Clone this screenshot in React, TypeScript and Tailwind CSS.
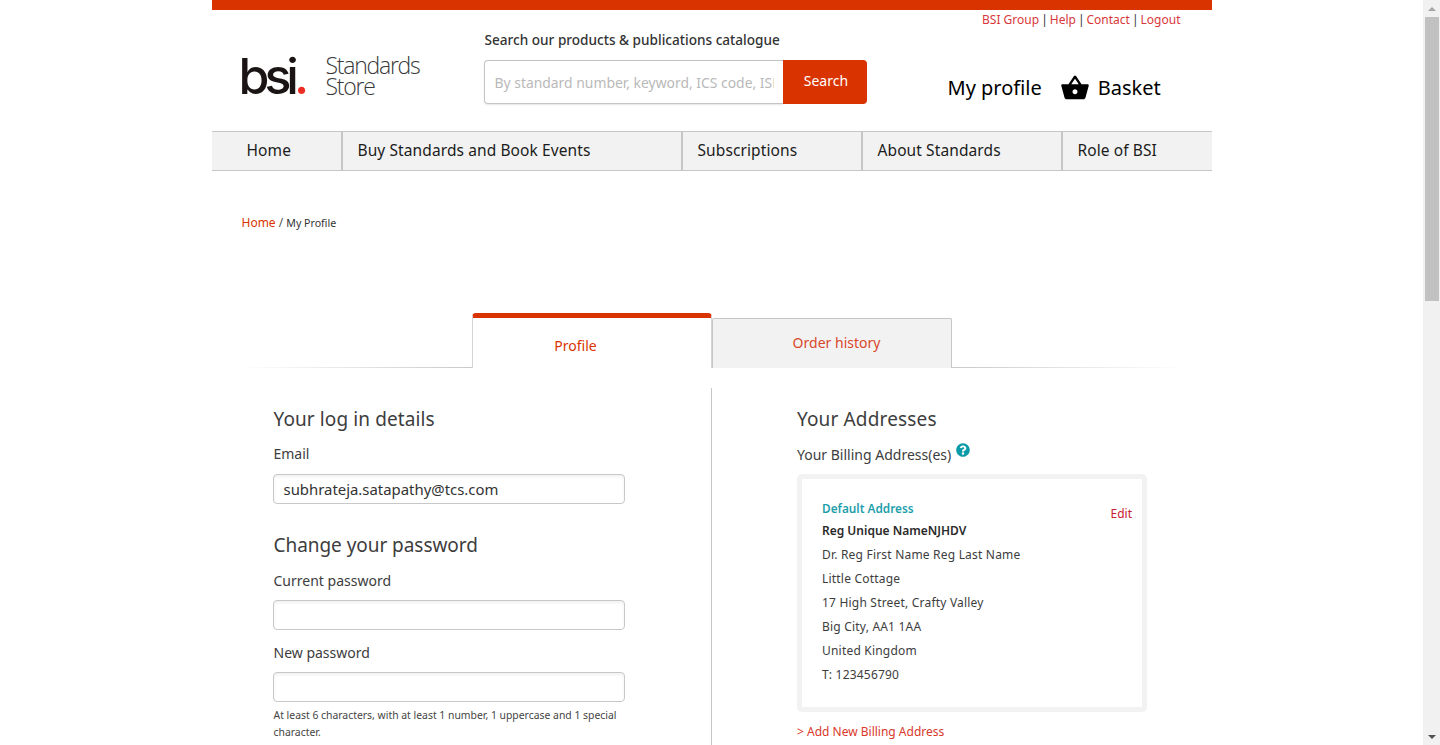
import { FaQuestionCircle } from "react-icons/fa";

const font = "font-['Noto_Sans',sans-serif]";

const navItems = [
  { label: "Home", width: "w-[131px]" },
  { label: "Buy Standards and Book Events", width: "w-[340px]" },
  { label: "Subscriptions", width: "w-[180px]" },
  { label: "About Standards", width: "w-[200px]" },
  { label: "Role of BSI", width: "w-[149px]" },
];

const utilityLinks = ["BSI Group", "Help", "Contact", "Logout"];

const addressLines = [
  "Dr. Reg First Name Reg Last Name",
  "Little Cottage",
  "17 High Street, Crafty Valley",
  "Big City, AA1 1AA",
  "United Kingdom",
  "T: 123456790",
];

function BasketIcon() {
  return (
    <svg viewBox="0 0 24 24" className="h-[30px] w-[30px]" fill="#000">
      <path d="M17.21 9l-4.38-6.56c-.19-.28-.51-.42-.83-.42-.32 0-.64.14-.83.43L6.79 9H2c-.55 0-1 .45-1 1 0 .09.01.18.04.27l2.54 9.27c.23.84 1 1.46 1.92 1.46h13c.92 0 1.69-.62 1.93-1.46l2.54-9.27L23 10c0-.55-.45-1-1-1h-4.79zM9 9l3-4.4L15 9H9zm3 8c-1.1 0-2-.9-2-2s.9-2 2-2 2 .9 2 2-.9 2-2 2z" />
    </svg>
  );
}

function Field({ label, value, compact }: { label: string; value?: string; compact?: boolean }) {
  return (
    <div>
      <label className="block h-[20px] pl-[1px] text-[14px] leading-[20px] text-[#3d3d3d]">{label}</label>
      <div
        className={`${compact ? "mt-[9px]" : "mt-[10px]"} flex h-[30px] w-[352px] items-center rounded-[4px] border border-[#c8c8c8] bg-white px-[10px] text-[14.9px] text-[#333] shadow-[inset_0_2px_3px_rgba(0,0,0,0.06)]`}
      >
        {value}
      </div>
    </div>
  );
}

function Scrollbar() {
  return (
    <div className="flex h-full w-[17px] shrink-0 flex-col items-center bg-[#f1f1f1]">
      <div className="flex h-[17px] items-center justify-center">
        <div className="h-0 w-0 border-x-[4px] border-b-[4px] border-x-transparent border-b-[#a3a3a3]" />
      </div>
      <div className="h-[284px] w-[14px] bg-[#c1c1c1]" />
      <div className="flex-1" />
      <div className="flex h-[17px] items-center justify-center">
        <div className="h-0 w-0 border-x-[4px] border-t-[4px] border-x-transparent border-t-[#505050]" />
      </div>
    </div>
  );
}

export default function App() {
  return (
    <div className={`flex h-[745px] overflow-hidden bg-white ${font}`}>
      <div className="flex-1 overflow-hidden">
        <div className="mx-auto w-[1000px]">
          {/* Header */}
          <div className="h-[10px] bg-[#d93400]" />
          <div className="flex h-[20px] justify-end pr-[31px] pt-[1px] text-[12px] leading-[18px] text-[#333]">
            {utilityLinks.map((link, i) => (
              <span key={link}>
                {i > 0 && <span className="mx-[2px]">|</span>}
                <a className="text-[#d9383a]">{link}</a>
              </span>
            ))}
          </div>
          <div className="flex h-[101px]">
            <div className="flex w-[272px] items-center pb-[10px] pl-[27px]">
              <span className="w-[87px] font-['Inter',sans-serif] text-[50px] font-medium leading-[50px] tracking-[-5px] text-[#1a1415]">
                bsi<span className="text-[#ee2e24]">.</span>
              </span>
              <span className="font-['Open_Sans',sans-serif] text-[23px] font-light leading-[21px] tracking-[-1.25px] text-[#3a3a3a]">
                Standards
                <br />
                Store
              </span>
            </div>
            <div className="w-[383px]">
              <p className="h-[20px] pl-[1px] text-[13.6px] font-medium leading-[20px] text-[#333]">Search our products &amp; publications catalogue</p>
              <div className="mt-[10px] flex h-[44px]">
                <input
                  readOnly
                  placeholder="By standard number, keyword, ICS code, ISBN"
                  className="w-[299px] rounded-l-[4px] border border-r-0 border-[#c4c4c4] pl-[10px] pr-[9px] pt-[2px] text-[13.9px] shadow-[0_1px_2px_rgba(0,0,0,0.1)] outline-none placeholder:text-[#b9b9b9]"
                />
                <button className="w-[84px] rounded-r-[4px] bg-[#d93400] pb-[3px] pl-[3px] text-[14px] tracking-[0.05px] text-white">Search</button>
              </div>
            </div>
            <div className="flex flex-1 items-center pl-[81px] pt-[15px] text-[20px] text-black">
              <span>My profile</span>
              <span className="ml-[18px] mr-[8px]">
                <BasketIcon />
              </span>
              <span>Basket</span>
            </div>
          </div>

          {/* Main nav */}
          <nav className="flex h-[40px] border-y border-[#c6c6c6] bg-[#f2f2f2] text-[15.5px] leading-[37px] tracking-[0.1px] text-[#1c1c1c]">
            {navItems.map((item, i) => (
              <div
                key={item.label}
                className={`${item.width} ${i === 0 ? "pl-[35px]" : "pl-[15px]"} ${i < navItems.length - 1 ? "border-r-2 border-[#c6c6c6]" : ""}`}
              >
                {item.label}
              </div>
            ))}
          </nav>

          {/* Breadcrumb */}
          <div className="mt-[43px] h-[18px] pl-[30px] text-[12px] leading-[18px] text-[#555]">
            <span className="text-[#d93400]">Home</span> / <span className="text-[10.6px] text-[#333]">My Profile</span>
          </div>

          {/* Tabs */}
          <div className="relative z-10 mt-[81px] flex items-end pl-[260px] text-[14px]">
            <div className="h-[55px] w-[240px] rounded-t-[4px] border-x border-t-[5px] border-x-[#d4d4d4] border-t-[#d93400] bg-white pr-[32px] pt-[18px] text-center leading-[20px] text-[#d93400]">
              Profile
            </div>
            <div className="h-[50px] w-[240px] rounded-t-[2px] border-x border-t border-[#c6c6c6] bg-[#f2f2f2] pl-[10px] pt-[14px] text-center leading-[20px] text-[#d9482b]">
              Order history
            </div>
          </div>
          <div className="mx-[30px] -mt-px h-px bg-[linear-gradient(to_right,transparent,#c8c8c8_25%,#c8c8c8_75%,transparent)]" />

          {/* Content */}
          <div className="mt-[20px] flex">
            <div className="h-[400px] w-[500px] border-r border-[#c6c6c6] pl-[61px] pt-[19px]">
              <h2 className="h-[24px] pl-[1px] text-[19px] font-normal leading-[24px] tracking-[0.1px] text-[#3d3d3d]">Your log in details</h2>
              <div className="mt-[13px]">
                <Field label="Email" value="subhrateja.satapathy@tcs.com" />
              </div>
              <h2 className="mt-[29px] h-[24px] pl-[1px] text-[19px] font-normal leading-[24px] tracking-[-0.05px] text-[#3d3d3d]">Change your password</h2>
              <div className="mt-[14px]">
                <Field compact label="Current password" />
              </div>
              <div className="mt-[13px]">
                <Field compact label="New password" />
              </div>
              <p className="mt-[5px] w-[353px] pl-[1px] text-[10.4px] leading-[17px] text-[#444]">
                At least 6 characters, with at least 1 number, 1 uppercase and 1 special character.
              </p>
            </div>
            <div className="pl-[85.5px] pt-[19px]">
              <h2 className="h-[24px] text-[19px] font-normal leading-[24px] tracking-[0.15px] text-[#3d3d3d]">Your Addresses</h2>
              <div className="mt-[14px] flex h-[19px] items-start text-[14px] leading-[20px] text-[#3d3d3d]">
                Your Billing Address(es)
                <FaQuestionCircle className="ml-[5px] mt-[-2px] text-[14px] text-[#0b9aa8]" />
              </div>
              <div className="mt-[10px] flex h-[238px] w-[350px] justify-between rounded-[5px] border-[5px] border-[#f2f2f2] pl-[20px] pr-[10px] pt-[20px] text-[12px] text-[#3d3d3d]">
                <div>
                  <div className="h-[18px] text-[11.8px] font-semibold leading-[18px] text-[#1f9fac]">Default Address</div>
                  <div className="mt-[2px] h-[24px] font-semibold leading-[24px] text-[#2b2b2b]">Reg Unique NameNJHDV</div>
                  {addressLines.map((line) => (
                    <div key={line} className="h-[24px] leading-[24px] tracking-[0.2px]">
                      {line}
                    </div>
                  ))}
                </div>
                <a className="mt-[6px] leading-[18px] text-[#c8202f]">Edit</a>
              </div>
              <a className="mt-[11px] block text-[12px] leading-[18px] text-[#d9382b]">&gt; Add New Billing Address</a>
            </div>
          </div>
        </div>
      </div>
      <Scrollbar />
    </div>
  );
}
